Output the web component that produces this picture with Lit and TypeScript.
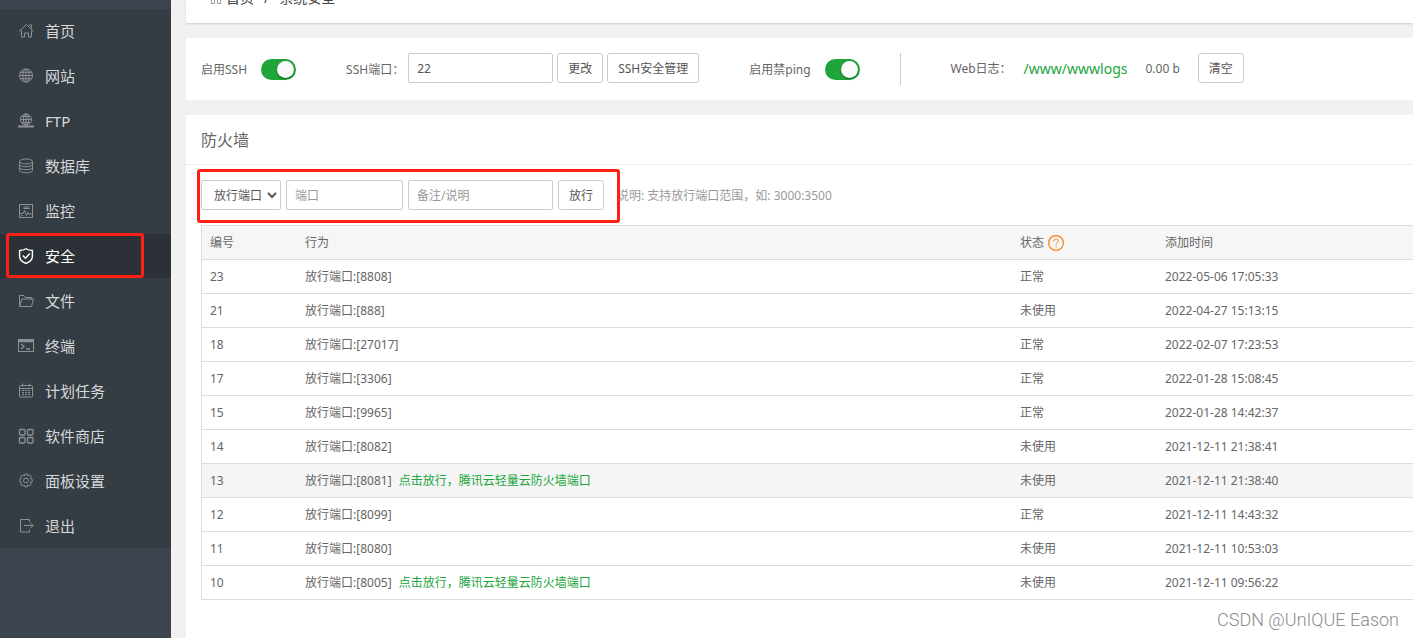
import { LitElement, html, css, svg } from "lit";
import { customElement, state } from "lit/decorators.js";
import { classMap } from "lit/directives/class-map.js";

const fonts = css`"Noto Sans", "Noto Sans CJK SC", sans-serif`;

const icons: Record<string, unknown> = {
  home: svg`<path d="M1 8.500 8.500 1.500l7 7M3.500 7.500v6.500h3v-4h4v4h3v-6.500M11 2h2.500v3.500"/>`,
  site: svg`<circle cx="8" cy="7.500" r="6.500"/><ellipse cx="8" cy="7.500" rx="3.200" ry="6.500"/><path d="M1.500 7.500h13M8 1v13M2.500 4.300h11M2.500 10.700h11"/>`,
  ftp: svg`<circle cx="8" cy="6.500" r="5.500"/><ellipse cx="8" cy="6.500" rx="2.600" ry="5.500"/><path d="M2.500 6.500h11M8 1v12M3.500 3.500h9M3.500 9.500h9"/><path d="M0 13.500h16M6 13.500h4" stroke-width="2"/>`,
  db: svg`<ellipse cx="8" cy="3.500" rx="6.500" ry="2.500"/><path d="M1.500 3.500v9c0 3 13 3 13 0v-9M1.500 6.500c0 3 13 3 13 0M1.500 9.500c0 3 13 3 13 0"/>`,
  monitor: svg`<rect x="1.500" y="1.500" width="13" height="13"/><path d="M2 10.500h3l1.500-3 2 5 1.500-3 1 1.500h3M5.500 4h6M5.500 5.500h6M3.500 12.500h1.500"/>`,
  shield: svg`<path d="M8 .8c2 1.400 4 1.700 6.400 1.700v6c0 3.500-3 5.500-6.400 7-3.400-1.500-6.400-3.500-6.400-7v-6C4 2.500 6 2.200 8 .8z"/><path d="m4.800 7.500 2.700 2.700 4.300-4.700"/>`,
  folder: svg`<path d="M1.500 13V2.500h4.500l1.500 2h6V6M1.500 13.500 4 6h11.500L13.500 13.500z"/>`,
  terminal: svg`<rect x=".5" y="1.500" width="15" height="12"/><path d="M.5 3h15" stroke-width="2.500"/><path d="m3 6 3 2.500L3 11M8 11h4" stroke-width="1.300"/>`,
  calendar: svg`<rect x="1.500" y="2.500" width="13" height="11.500" rx="1"/><path d="M1.500 5.500h13M4.500.5v3M11.500.5v3"/><path d="M4 7.500h8M4 9.500h8M4 11.500h8" stroke-dasharray="2 1"/>`,
  apps: svg`<g stroke-width="1.300"><rect x="1.500" y="1.500" width="5.500" height="5.500" rx="1"/><rect x="9.500" y="1.500" width="5.500" height="5.500" rx="1"/><rect x="1.500" y="9.500" width="5.500" height="5.500" rx="1"/><rect x="9.500" y="9.500" width="5.500" height="5.500" rx="1"/></g>`,
  gear: svg`<g transform="translate(.5)"><circle cx="7.500" cy="7.500" r="2.500"/><path d="m6.300 1h2.400l.5 1.900 1.900-1 1.700 1.700-1 1.900 1.900.8v2.400l-1.900.6 1 1.900-1.700 1.700-1.900-1-.5 1.900H6.300l-.6-1.900-1.900 1-1.700-1.700 1-1.900-1.900-.6V6.300l1.900-.8-1-1.900 1.700-1.700 1.900 1z"/></g>`,
  exit: svg`<path d="M11.500 4V1.500h-9v12.500h9V11.500M6 7.500h9M12.300 4.700l2.800 2.800-2.800 2.800"/>`,
};

const menu: [string, string][] = [
  ["home", "首页"],
  ["site", "网站"],
  ["ftp", "FTP"],
  ["db", "数据库"],
  ["monitor", "监控"],
  ["shield", "安全"],
  ["folder", "文件"],
  ["terminal", "终端"],
  ["calendar", "计划任务"],
  ["apps", "软件商店"],
  ["gear", "面板设置"],
  ["exit", "退出"],
];

interface Rule {
  id: number;
  port: number;
  used: boolean;
  time: string;
  cloud?: boolean;
}

const rules: Rule[] = [
  { id: 23, port: 8808, used: true, time: "2022-05-06 17:05:33" },
  { id: 21, port: 888, used: false, time: "2022-04-27 15:13:15" },
  { id: 18, port: 27017, used: true, time: "2022-02-07 17:23:53" },
  { id: 17, port: 3306, used: true, time: "2022-01-28 15:08:45" },
  { id: 15, port: 9965, used: true, time: "2022-01-28 14:42:37" },
  { id: 14, port: 8082, used: false, time: "2021-12-11 21:38:41" },
  { id: 13, port: 8081, used: false, time: "2021-12-11 21:38:40", cloud: true },
  { id: 12, port: 8099, used: true, time: "2021-12-11 14:43:32" },
  { id: 11, port: 8080, used: false, time: "2021-12-11 10:53:03" },
  { id: 10, port: 8005, used: false, time: "2021-12-11 09:56:22", cloud: true },
];

@customElement("side-menu")
class SideMenu extends LitElement {
  @state() active = "shield";

  static styles = css`
    :host {
      display: block;
      background: #3c444d;
      padding-top: 9px;
    }
    .list {
      list-style: none;
      margin: 0;
      padding: 0;
      background: #353d44;
      display: grid;
      gap: 1px;
    }
    .item {
      position: relative;
    }
    .link {
      display: flex;
      align-items: center;
      gap: 11px;
      height: 44px;
      padding-left: 18px;
      color: #d5d7d9;
      font: 15px/20px ${fonts};
      text-decoration: none;
    }
    .icon {
      width: 16px;
      height: 16px;
      flex: none;
      fill: none;
      stroke: #8e9194;
      stroke-width: 1;
    }
    .active {
      background: #2c3138;
      color: #fff;
    }
    .active .icon {
      stroke: #fff;
      stroke-width: 1.4;
    }
    .mark {
      position: absolute;
      inset: -1px 27px 0 6px;
      border: 3px solid #ff1f14;
      border-radius: 3px;
      pointer-events: none;
    }
  `;

  render() {
    return html`<nav>
      <ul class="list">
        ${menu.map(
          ([icon, label]) => html`<li class="item">
            <a
              class=${classMap({ link: true, active: icon === this.active })}
              href="#${icon}"
              @click=${() => (this.active = icon)}
            >
              <svg class="icon" viewBox="0 0 16 16" aria-hidden="true">${icons[icon]}</svg>
              <span>${label}</span>
            </a>
            ${icon === this.active ? html`<span class="mark"></span>` : ""}
          </li>`
        )}
      </ul>
    </nav>`;
  }
}

@customElement("app-root")
class AppRoot extends LitElement {
  static styles = css`
    :host {
      display: grid;
      grid-template-columns: 171px minmax(0, 1fr);
      min-height: 100vh;
      position: relative;
      background: #f1f1f1;
      color: #666;
      font: 12px/18px ${fonts};
    }
    .main {
      display: flex;
      flex-direction: column;
      gap: 15px;
      padding-left: 15px;
    }
    .card {
      background: #fff;
    }
    .crumbs {
      height: 23px;
      box-sizing: border-box;
      padding: 0 24px 15px;
      display: flex;
      align-items: flex-end;
      gap: 10px;
      overflow: hidden;
      box-shadow: 0 1px 2px rgba(0, 0, 0, 0.15);
      color: #444;
      font-size: 14px;
      line-height: 20px;
    }
    .crumb-home {
      display: flex;
      align-items: center;
      gap: 4px;
      color: inherit;
      text-decoration: none;
    }
    .crumb-icon {
      width: 12px;
      height: 14px;
      fill: none;
      stroke: #999;
    }
    .tools {
      display: flex;
      align-items: center;
      padding: 15px;
      height: 32px;
      white-space: nowrap;
    }
    .group {
      display: flex;
      align-items: center;
      gap: 4px;
      height: 32px;
    }
    .group .field,
    .group .button {
      align-self: flex-start;
    }
    .text {
      padding-top: 2px;
    }
    .ssh {
      margin-left: 50px;
    }
    .ping {
      margin-left: 50px;
      padding-right: 40px;
      border-right: 1px solid #ccc;
    }
    .logs {
      margin-left: 50px;
      gap: 12px;
    }
    .path {
      color: #20a53a;
      font-size: 14px;
      text-decoration: none;
      margin-right: 6px;
    }
    .size {
      margin-right: 6px;
    }
    .toggle-label {
      display: flex;
      align-items: center;
      gap: 14px;
    }
    .toggle {
      appearance: none;
      margin: 0;
      width: 35px;
      height: 21px;
      border-radius: 11px;
      background: #ccc;
      padding: 2px;
      box-sizing: border-box;
      display: flex;
    }
    .toggle:checked {
      background: #20a53a;
      justify-content: flex-end;
    }
    .toggle::before {
      content: "";
      width: 17px;
      height: 17px;
      border-radius: 50%;
      background: #fafafa;
      box-shadow: 0 1px 2px rgba(0, 0, 0, 0.4);
    }
    .field,
    .button,
    .select {
      height: 30px;
      box-sizing: border-box;
      margin: 0;
      border: 1px solid #ccc;
      border-radius: 2px;
      background: #fff;
      color: #555;
      font: 12px/18px ${fonts};
    }
    .field {
      padding: 0 8px;
      width: 145px;
    }
    .port {
      width: 117px;
    }
    .field::placeholder {
      color: #999;
      opacity: 1;
    }
    .button {
      padding: 2px 10px 0;
      border-radius: 3px;
    }
    .select {
      width: 80px;
      padding: 0 0 0 8px;
    }
    .title {
      margin: 0;
      padding: 16px 15px 14px;
      border-bottom: 1px solid #eee;
      font-size: 16px;
      line-height: 19px;
      font-weight: 400;
    }
    .firewall {
      flex: 1;
    }
    .body {
      padding: 15px 0 36px 15px;
    }
    .form {
      position: relative;
      display: flex;
      align-items: center;
      gap: 5px;
      width: fit-content;
      margin-bottom: 15px;
    }
    .hint {
      margin-left: 8px;
      color: #999;
    }
    .mark {
      position: absolute;
      left: -4px;
      top: -11px;
      width: 417px;
      height: 48px;
      border: 3px solid #ff1f14;
      border-radius: 3px;
      pointer-events: none;
    }
    .table {
      width: 100%;
      table-layout: fixed;
      border-spacing: 0;
      border: 1px solid #ddd;
      border-width: 1px 0 0 1px;
    }
    .cell {
      box-sizing: border-box;
      height: 34px;
      padding: 8px;
      line-height: 17px;
      text-align: left;
      font-weight: 400;
      border-bottom: 1px solid #ddd;
    }
    .head {
      background: #f6f6f6;
    }
    .hover {
      background: #f5f5f5;
    }
    .c-id {
      width: 95px;
    }
    .c-state {
      width: 145px;
    }
    .c-time {
      width: 256px;
    }
    .state {
      display: flex;
      align-items: center;
      gap: 4px;
    }
    .help {
      width: 16px;
      height: 16px;
    }
    .green {
      color: #20a53a;
      text-decoration: none;
      margin-left: 4px;
    }
    .watermark {
      position: absolute;
      right: 14px;
      bottom: 8px;
      color: #8c8c8c;
      font: 300 18px/20px Roboto, sans-serif;
    }
  `;

  render() {
    return html`
      <side-menu></side-menu>
      <main class="main">
        <header class="card crumbs">
          <a class="crumb-home" href="#home">
            <svg class="crumb-icon" viewBox="0 0 12 14" aria-hidden="true">
              <path d="M1.500 12.500v-8l4.500-4 4.500 4v8h-3v-5h-3v5z" />
            </svg>
            首页
          </a>
          <span>/</span>
          <span>系统安全</span>
        </header>

        <section class="card tools">
          <label class="toggle-label">
            <span class="text">启用SSH</span>
            <input class="toggle" type="checkbox" checked />
          </label>
          <div class="group ssh">
            <label class="text" for="ssh-port">SSH端口：</label>
            <input class="field" id="ssh-port" value="22" />
            <button class="button">更改</button>
            <button class="button">SSH安全管理</button>
          </div>
          <div class="group ping">
            <label class="toggle-label">
              <span class="text">启用禁ping</span>
              <input class="toggle" type="checkbox" checked />
            </label>
          </div>
          <div class="group logs">
            <span>Web日志：</span>
            <a class="path" href="#logs">/www/wwwlogs</a>
            <span class="size">0.00 b</span>
            <button class="button">清空</button>
          </div>
        </section>

        <section class="card firewall">
          <h1 class="title">防火墙</h1>
          <div class="body">
            <div class="form">
              <select class="select" aria-label="类型">
                <option>放行端口</option>
              </select>
              <input class="field port" placeholder="端口" aria-label="端口" />
              <input class="field" placeholder="备注/说明" aria-label="备注/说明" />
              <button class="button">放行</button>
              <span class="hint text">说明: 支持放行端口范围，如: 3000:3500</span>
              <span class="mark"></span>
            </div>
            <table class="table">
              <thead>
                <tr class="head">
                  <th class="cell c-id">编号</th>
                  <th class="cell">行为</th>
                  <th class="cell c-state">
                    <span class="state">
                      状态
                      <svg class="help" viewBox="0 0 16 16" fill="none" stroke="#f7821b" aria-hidden="true">
                        <circle cx="8" cy="8" r="7.400" stroke-width="1.200" />
                        <path d="M5.800 6.300c0-3 4.500-3 4.500-.2 0 1.600-2.200 1.700-2.200 3.600M8.100 11v1.300" />
                      </svg>
                    </span>
                  </th>
                  <th class="cell c-time">添加时间</th>
                </tr>
              </thead>
              <tbody>
                ${rules.map(
                  (r) => html`<tr class=${classMap({ hover: r.id === 13 })}>
                    <td class="cell">${r.id}</td>
                    <td class="cell">
                      放行端口:[${r.port}]
                      ${r.cloud ? html`<a class="green" href="#cloud">点击放行，腾讯云轻量云防火墙端口</a>` : ""}
                    </td>
                    <td class="cell">${r.used ? "正常" : "未使用"}</td>
                    <td class="cell">${r.time}</td>
                  </tr>`
                )}
              </tbody>
            </table>
          </div>
        </section>
      </main>
      <div class="watermark">CSDN @UnIQUE Eason</div>
    `;
  }
}
